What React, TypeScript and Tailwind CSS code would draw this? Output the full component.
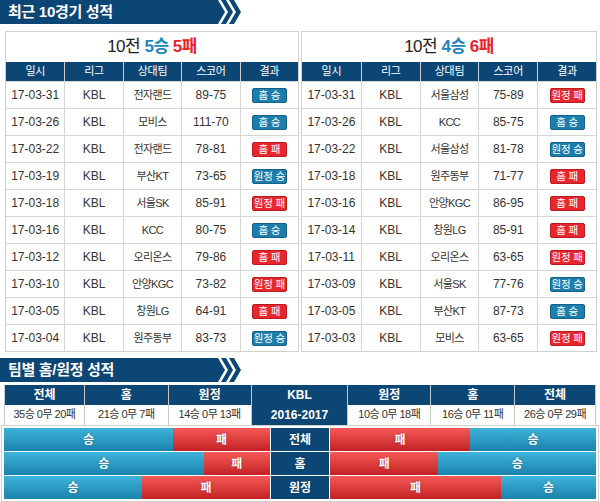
import React from 'react';

type Game = { date: string; team: string; score: string; place: string; win: boolean };

const leftGames: Game[] = [
  { date: '17-03-31', team: '전자랜드', score: '89-75', place: '홈', win: true },
  { date: '17-03-26', team: '모비스', score: '111-70', place: '홈', win: true },
  { date: '17-03-22', team: '전자랜드', score: '78-81', place: '홈', win: false },
  { date: '17-03-19', team: '부산KT', score: '73-65', place: '원정', win: true },
  { date: '17-03-18', team: '서울SK', score: '85-91', place: '원정', win: false },
  { date: '17-03-16', team: 'KCC', score: '80-75', place: '홈', win: true },
  { date: '17-03-12', team: '오리온스', score: '79-86', place: '홈', win: false },
  { date: '17-03-10', team: '안양KGC', score: '73-82', place: '원정', win: false },
  { date: '17-03-05', team: '창원LG', score: '64-91', place: '홈', win: false },
  { date: '17-03-04', team: '원주동부', score: '83-73', place: '원정', win: true },
];

const rightGames: Game[] = [
  { date: '17-03-31', team: '서울삼성', score: '75-89', place: '원정', win: false },
  { date: '17-03-26', team: 'KCC', score: '85-75', place: '홈', win: true },
  { date: '17-03-22', team: '서울삼성', score: '81-78', place: '원정', win: true },
  { date: '17-03-18', team: '원주동부', score: '71-77', place: '홈', win: false },
  { date: '17-03-16', team: '안양KGC', score: '86-95', place: '홈', win: false },
  { date: '17-03-14', team: '창원LG', score: '85-91', place: '홈', win: false },
  { date: '17-03-11', team: '오리온스', score: '63-65', place: '원정', win: false },
  { date: '17-03-09', team: '서울SK', score: '77-76', place: '원정', win: true },
  { date: '17-03-05', team: '부산KT', score: '87-73', place: '홈', win: true },
  { date: '17-03-03', team: '모비스', score: '63-65', place: '원정', win: false },
];

const FONT = { fontFamily: '"Liberation Sans", "Noto Sans CJK KR", sans-serif' };

const SectionBar: React.FC<{ title: string }> = ({ title }) => (
  <div className="flex h-[24px] items-stretch">
    <div className="w-[214px] bg-[#0c4675] pl-[8px] text-[15px] font-bold leading-[24px] tracking-[-0.3px] text-white">{title}</div>
    <svg width="32" height="24" viewBox="0 0 32 24">
      <polygon points="0,0 4,0 11,12 4,24 0,24" fill="#0c4675" />
      <polygon points="7,0 12,0 19,12 12,24 7,24 14,12" fill="#0c4675" />
      <polygon points="15,0 20,0 27,12 20,24 15,24 22,12" fill="#0c4675" />
    </svg>
  </div>
);

const Badge: React.FC<{ place: string; win: boolean }> = ({ place, win }) => (
  <span
    className={`inline-flex h-[15px] w-[35px] items-center justify-center rounded-[2px] border text-[10.5px] leading-none tracking-[-0.2px] text-white ${
      win ? 'border-[#13618a] bg-[#1d7eac]' : 'border-[#b81c22] bg-[#ea262d]'
    }`}
  >
    {place} {win ? '승' : '패'}
  </span>
);

const GamesTable: React.FC<{ games: Game[]; wins: number; losses: number; width: string }> = ({ games, wins, losses, width }) => (
  <div className={`${width} border border-[#cfcfcf] bg-white`}>
    <div className="flex h-[30px] items-center justify-center text-[17px] tracking-[-0.5px] text-[#222]">
      10전&nbsp;<b className="text-[#1c86bd]">{wins}승</b>&nbsp;<b className="text-[#e8222a]">{losses}패</b>
    </div>
    <div className="grid h-[19px] grid-cols-5 bg-[#0c4675] text-[11px] leading-[19px] tracking-[-0.3px] text-white">
      {['일시', '리그', '상대팀', '스코어', '결과'].map((h, i) => (
        <div key={h} className={`text-center ${i > 0 ? 'border-l border-[#cfcfcf]' : ''}`}>
          {h}
        </div>
      ))}
    </div>
    {games.map((g) => (
      <div key={g.date + g.team} className="grid h-[27px] grid-cols-5 border-t border-[#d6d6d6] text-[12px] text-[#333]">
        <div className="flex items-center justify-center">{g.date}</div>
        <div className="flex items-center justify-center border-l border-[#d6d6d6]">KBL</div>
        <div className="flex items-center justify-center border-l border-[#d6d6d6] text-[11px] tracking-[-0.6px]">{g.team}</div>
        <div className="flex items-center justify-center border-l border-[#d6d6d6]">{g.score}</div>
        <div className="flex items-center justify-center border-l border-[#d6d6d6]">
          <Badge place={g.place} win={g.win} />
        </div>
      </div>
    ))}
  </div>
);

const Stat: React.FC<{ head: string; value: string; width: string }> = ({ head, value, width }) => (
  <div className={`${width} flex flex-col border-r border-[#c8c8c8]`}>
    <div className="h-[20px] bg-[#0c4675] text-center text-[12px] font-bold leading-[20px] text-white">{head}</div>
    <div className="h-[19px] whitespace-nowrap text-center text-[11px] leading-[19px] tracking-[-0.5px] text-[#333]">{value}</div>
  </div>
);

const blue = 'bg-gradient-to-b from-[#3db3d8] to-[#1a83ad]';
const red = 'bg-gradient-to-b from-[#f65757] to-[#c31f22]';

const BarRow: React.FC<{ label: string; lw: number; ll: number; rw: number; rl: number }> = ({ label, lw, ll, rw, rl }) => (
  <div className="flex h-[23px] text-[12px] font-bold text-white [text-shadow:0_0_2px_rgba(0,0,0,0.3)]">
    <div className="flex w-[266px]">
      <div className={`${blue} flex items-center justify-center`} style={{ width: `${(lw / (lw + ll)) * 100}%` }}>승</div>
      <div className={`${red} flex flex-1 items-center justify-center`}>패</div>
    </div>
    <div className="mx-[1px] flex w-[58px] items-center justify-center bg-[#0c4675]">{label}</div>
    <div className="flex w-[266px]">
      <div className={`${red} flex items-center justify-center`} style={{ width: `${(rl / (rw + rl)) * 100}%` }}>패</div>
      <div className={`${blue} flex flex-1 items-center justify-center`}>승</div>
    </div>
  </div>
);

export default function App() {
  return (
    <div className="h-[502px] w-[600px] overflow-hidden bg-white" style={FONT}>
      <SectionBar title="최근 10경기 성적" />
      <div className="mt-[7px] flex gap-[2px] pl-[5px]">
        <GamesTable games={leftGames} wins={5} losses={5} width="w-[294px]" />
        <GamesTable games={rightGames} wins={4} losses={6} width="w-[296px]" />
      </div>
      <div className="mt-[6px]">
        <SectionBar title="팀별 홈/원정 성적" />
      </div>
      <div className="ml-[4px] mt-[3px] flex w-[592px] border-l border-[#c8c8c8]">
        <Stat head="전체" value="35승 0무 20패" width="w-[80px]" />
        <Stat head="홈" value="21승 0무 7패" width="w-[84px]" />
        <Stat head="원정" value="14승 0무 13패" width="w-[83px]" />
        <div className="flex w-[97px] flex-col items-center justify-center border-r border-[#c8c8c8] bg-[#0c4675] text-[12px] font-bold leading-[20px] text-white">
          <div>KBL</div>
          <div>2016-2017</div>
        </div>
        <Stat head="원정" value="10승 0무 18패" width="w-[83px]" />
        <Stat head="홈" value="16승 0무 11패" width="w-[84px]" />
        <Stat head="전체" value="26승 0무 29패" width="w-[81px]" />
      </div>
      <div className="ml-[1px] flex w-[598px] flex-col gap-[1px] border border-[#cfcfcf] px-[2px] py-[2px]">
        <BarRow label="전체" lw={35} ll={20} rw={26} rl={29} />
        <BarRow label="홈" lw={21} ll={7} rw={16} rl={11} />
        <BarRow label="원정" lw={14} ll={13} rw={10} rl={18} />
      </div>
    </div>
  );
}
